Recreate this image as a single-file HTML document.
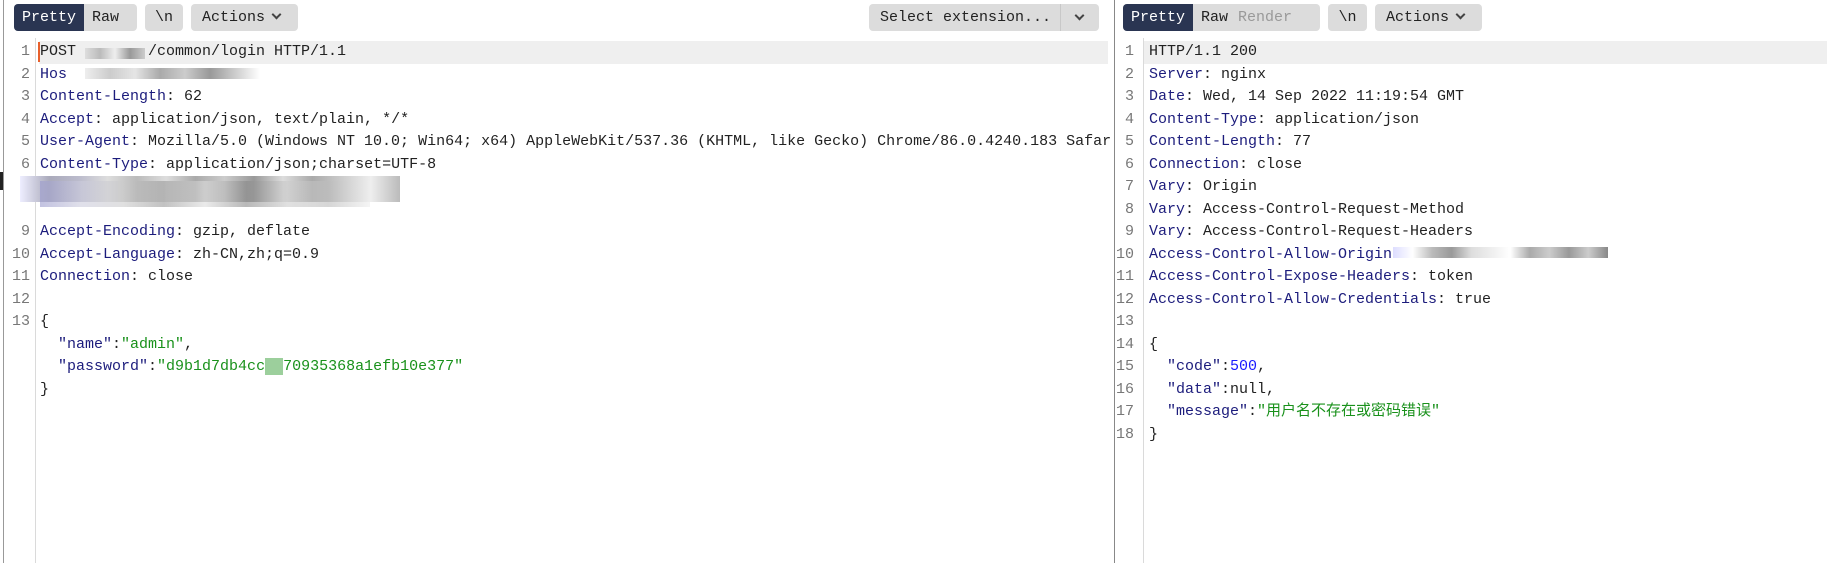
<!DOCTYPE html>
<html><head><meta charset="utf-8"><style>
*{margin:0;padding:0;box-sizing:border-box}
body{width:1827px;height:563px;background:#fff;position:relative;overflow:hidden;font-family:"Liberation Mono","Noto Sans CJK SC",monospace;font-size:15px;color:#222}
.a{position:absolute}
.btn{position:absolute;top:4px;height:27px;background:#dcdcdc;border-radius:4px;font-size:15px;line-height:27px;color:#222;white-space:nowrap}
.seg{display:inline-block;height:27px;padding:0 8px}
.on{background:#2a3552;color:#fff;border-radius:4px 0 0 4px}
.ln{position:absolute;height:22.5px;line-height:22.5px;white-space:pre}
.num{color:#777;text-align:right;width:24px}
.k{color:#1c1c7c}
.s{color:#19911b}
.n{color:#1a1aff}
.hl{position:absolute;background:#efefef;height:22.5px}
.vl{position:absolute;top:38px;bottom:0;width:1px;background:#dadada}
.blk{position:absolute;height:11px}
.chev{display:inline-block;width:7px;height:7px;border-right:2px solid #444;border-bottom:2px solid #444;transform:rotate(45deg);margin-left:8px;position:relative;top:-3px}
</style></head><body>
<div class="a" style="left:3px;top:0;bottom:0;width:1px;background:#999"></div>
<div class="a" style="left:1114px;top:0;bottom:0;width:1px;background:#888"></div>
<div class="a" style="left:0;top:172px;width:3px;height:18px;background:#222"></div>

<!-- left toolbar -->
<div class="btn" style="left:14px;width:123px"><span class="seg on">Pretty</span><span class="seg">Raw</span></div>
<div class="btn" style="left:145px;width:38px;text-align:center">\n</div>
<div class="btn" style="left:191px;width:107px;padding-left:11px">Actions<span class="chev"></span></div>
<div class="btn" style="left:869px;width:230px;padding-left:11px">Select extension...<span style="position:absolute;left:191px;top:0;width:1px;height:27px;background:#c8c8c8"></span><span class="chev" style="position:absolute;left:207px;top:8px;margin:0"></span></div>

<!-- right toolbar -->
<div class="btn" style="left:1123px;width:197px"><span class="seg on">Pretty</span><span class="seg">Raw</span><span class="seg" style="color:#999;padding-left:2px">Render</span></div>
<div class="btn" style="left:1328px;width:39px;text-align:center">\n</div>
<div class="btn" style="left:1375px;width:107px;padding-left:11px">Actions<span class="chev"></span></div>

<div class="hl" style="left:39px;top:41px;width:1069px"></div>
<div class="hl" style="left:1144px;top:41px;width:683px"></div>
<div class="a" style="left:38px;top:42px;width:2px;height:20px;background:#e8602c"></div>
<div class="vl" style="left:35px"></div>
<div class="vl" style="left:1143px"></div>

<!-- blurred blocks -->
<div class="blk" style="left:85px;top:48px;width:60px;background:linear-gradient(90deg,#ddd,#bbb,#eee,#999,#ccc)"></div>
<div class="blk" style="left:85px;top:68px;width:175px;background:linear-gradient(90deg,#eee,#ccc,#e5e5e5,#aaa,#ccc,#999,#ccc,#fff)"></div>
<div class="blk" style="left:20px;top:176px;width:380px;height:26px;background:linear-gradient(90deg,#eef,#aab,#bbc,#ddd,#bbb,#ddd,#aaa,#ccc,#999,#ddd,#aaa,#ccc,#eee,#bbb)"></div>
<div class="blk" style="left:40px;top:181px;width:330px;height:26px;opacity:.6;background:linear-gradient(90deg,#99c,#ccd,#ccc,#999,#ddd,#888,#ccc,#bbb,#eee)"></div>
<div class="blk" style="left:1393px;top:247px;width:215px;background:linear-gradient(90deg,#ddf,#fff,#bbb,#999,#ddd,#eee,#fff,#aaa,#ccc,#999,#ccc,#888)"></div>

<!-- left lines -->
<div class="ln num" style="left:6px;top:41px">1</div><div class="ln" style="left:40px;top:41px">POST <span style="color:transparent">xxxxxxx</span>/common/login HTTP/1.1</div>
<div class="ln num" style="left:6px;top:63.5px">2</div><div class="ln k" style="left:40px;top:63.5px">Hos</div>
<div class="ln num" style="left:6px;top:86px">3</div><div class="ln" style="left:40px;top:86px"><span class="k">Content-Length</span>: 62</div>
<div class="ln num" style="left:6px;top:108.5px">4</div><div class="ln" style="left:40px;top:108.5px"><span class="k">Accept</span>: application/json, text/plain, */*</div>
<div class="ln num" style="left:6px;top:131px">5</div><div class="ln" style="left:40px;top:131px"><span class="k">User-Agent</span>: Mozilla/5.0 (Windows NT 10.0; Win64; x64) AppleWebKit/537.36 (KHTML, like Gecko) Chrome/86.0.4240.183 Safar</div>
<div class="ln num" style="left:6px;top:153.5px">6</div><div class="ln" style="left:40px;top:153.5px"><span class="k">Content-Type</span>: application/json;charset=UTF-8</div>
<div class="ln num" style="left:6px;top:221px">9</div><div class="ln" style="left:40px;top:221px"><span class="k">Accept-Encoding</span>: gzip, deflate</div>
<div class="ln num" style="left:6px;top:243.5px">10</div><div class="ln" style="left:40px;top:243.5px"><span class="k">Accept-Language</span>: zh-CN,zh;q=0.9</div>
<div class="ln num" style="left:6px;top:266px">11</div><div class="ln" style="left:40px;top:266px"><span class="k">Connection</span>: close</div>
<div class="ln num" style="left:6px;top:288.5px">12</div>
<div class="ln num" style="left:6px;top:311px">13</div><div class="ln" style="left:40px;top:311px">{</div>
<div class="ln" style="left:40px;top:333.5px">  <span class="k">"name"</span>:<span class="s">"admin"</span>,</div>
<div class="ln" style="left:40px;top:356px">  <span class="k">"password"</span>:<span class="s">"d9b1d7db4cc<span style="background:#9ccf9c;color:transparent">xx</span>70935368a1efb10e377"</span></div>
<div class="ln" style="left:40px;top:378.5px">}</div>

<!-- right lines -->
<div class="ln num" style="left:1110px;top:41px">1</div><div class="ln" style="left:1149px;top:41px">HTTP/1.1 200</div>
<div class="ln num" style="left:1110px;top:63.5px">2</div><div class="ln" style="left:1149px;top:63.5px"><span class="k">Server</span>: nginx</div>
<div class="ln num" style="left:1110px;top:86px">3</div><div class="ln" style="left:1149px;top:86px"><span class="k">Date</span>: Wed, 14 Sep 2022 11:19:54 GMT</div>
<div class="ln num" style="left:1110px;top:108.5px">4</div><div class="ln" style="left:1149px;top:108.5px"><span class="k">Content-Type</span>: application/json</div>
<div class="ln num" style="left:1110px;top:131px">5</div><div class="ln" style="left:1149px;top:131px"><span class="k">Content-Length</span>: 77</div>
<div class="ln num" style="left:1110px;top:153.5px">6</div><div class="ln" style="left:1149px;top:153.5px"><span class="k">Connection</span>: close</div>
<div class="ln num" style="left:1110px;top:176px">7</div><div class="ln" style="left:1149px;top:176px"><span class="k">Vary</span>: Origin</div>
<div class="ln num" style="left:1110px;top:198.5px">8</div><div class="ln" style="left:1149px;top:198.5px"><span class="k">Vary</span>: Access-Control-Request-Method</div>
<div class="ln num" style="left:1110px;top:221px">9</div><div class="ln" style="left:1149px;top:221px"><span class="k">Vary</span>: Access-Control-Request-Headers</div>
<div class="ln num" style="left:1110px;top:243.5px">10</div><div class="ln" style="left:1149px;top:243.5px"><span class="k">Access-Control-Allow-Origin</span></div>
<div class="ln num" style="left:1110px;top:266px">11</div><div class="ln" style="left:1149px;top:266px"><span class="k">Access-Control-Expose-Headers</span>: token</div>
<div class="ln num" style="left:1110px;top:288.5px">12</div><div class="ln" style="left:1149px;top:288.5px"><span class="k">Access-Control-Allow-Credentials</span>: true</div>
<div class="ln num" style="left:1110px;top:311px">13</div>
<div class="ln num" style="left:1110px;top:333.5px">14</div><div class="ln" style="left:1149px;top:333.5px">{</div>
<div class="ln num" style="left:1110px;top:356px">15</div><div class="ln" style="left:1149px;top:356px">  <span class="k">"code"</span>:<span class="n">500</span>,</div>
<div class="ln num" style="left:1110px;top:378.5px">16</div><div class="ln" style="left:1149px;top:378.5px">  <span class="k">"data"</span>:null,</div>
<div class="ln num" style="left:1110px;top:401px">17</div><div class="ln" style="left:1149px;top:401px">  <span class="k">"message"</span>:<span class="s">"用户名不存在或密码错误"</span></div>
<div class="ln num" style="left:1110px;top:423.5px">18</div><div class="ln" style="left:1149px;top:423.5px">}</div>
</body></html>
